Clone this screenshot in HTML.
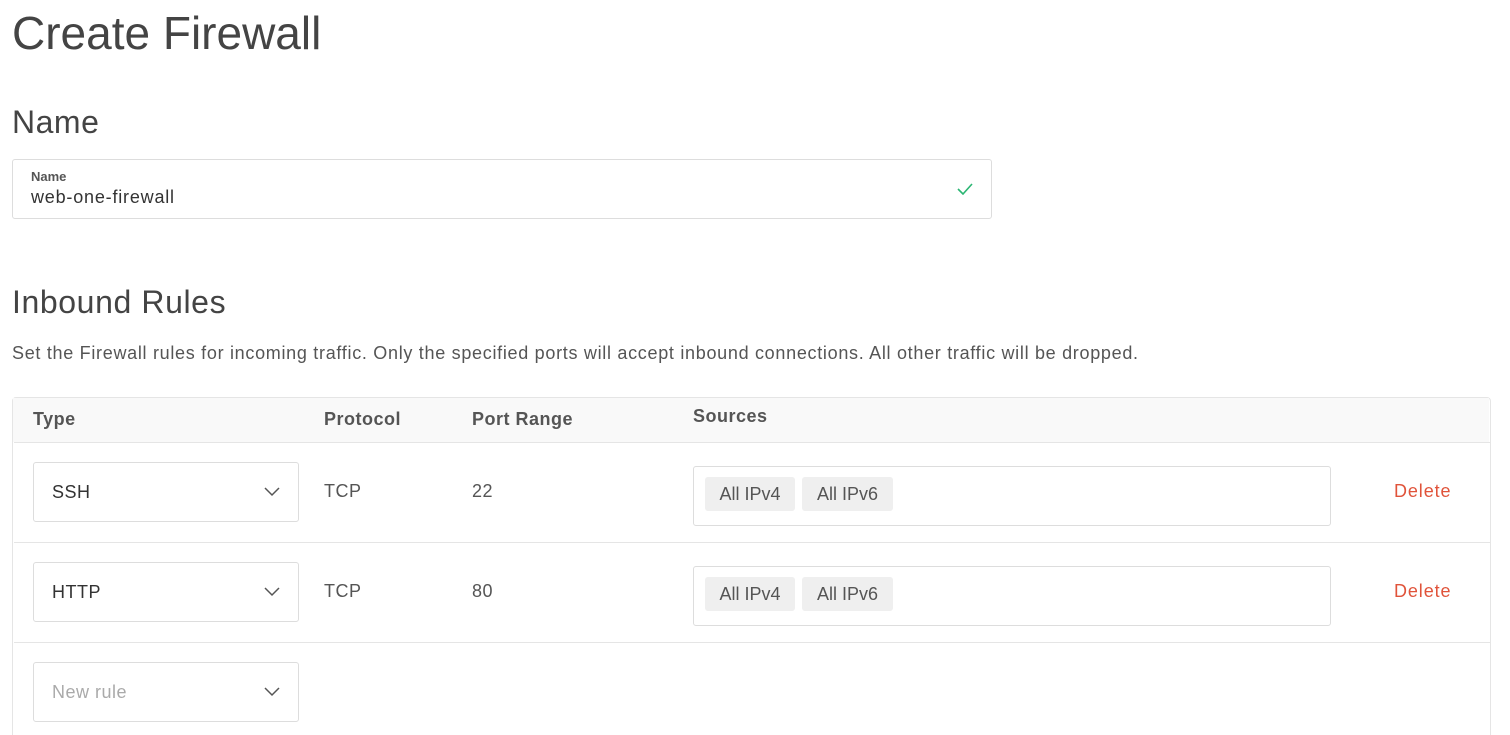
<!DOCTYPE html>
<html><head><style>
html,body{margin:0;height:735px;overflow:hidden}
body{background:#fff;font-family:"Liberation Sans",sans-serif;color:#444;width:1510px;position:relative}
.a{position:absolute}
.sel{position:absolute;left:33px;width:264px;height:58px;border:1px solid #ddd;border-radius:3px;background:#fff}
.sel span{position:absolute;left:18px;top:19px;font-size:18px;color:#333;letter-spacing:0.5px}
.sel svg{position:absolute;right:18px;top:24px}
.src{position:absolute;left:693px;width:636px;height:58px;border:1px solid #ddd;border-radius:3px}
.tag{position:absolute;top:10px;height:34px;background:#efefef;border-radius:3px;font-size:18px;color:#555;line-height:34px;text-align:center}
.del{position:absolute;left:1394px;font-size:18px;color:#e0533a;letter-spacing:0.9px}
.cell{position:absolute;font-size:18px;color:#555;letter-spacing:0.5px}
.row{position:absolute;left:14px;width:1476px;height:100px;border-top:1px solid #e5e5e5}
</style></head><body>
<div class="a" style="left:12px;top:6px;font-size:46px;font-weight:300;color:#444">Create Firewall</div>
<div class="a" style="left:12px;top:104px;font-size:32px;color:#444;letter-spacing:0.5px">Name</div>
<div class="a" style="left:12px;top:284px;font-size:32px;color:#444;letter-spacing:0.6px">Inbound Rules</div>
<div class="a" style="left:12px;top:159px;width:978px;height:58px;border:1px solid #ddd;border-radius:3px">
 <div class="a" style="left:18px;top:9px;font-size:13px;font-weight:bold;color:#555">Name</div>
 <div class="a" style="left:18px;top:27px;font-size:18px;color:#333;letter-spacing:0.8px">web-one-firewall</div>
 <svg class="a" style="left:944px;top:23px" width="16" height="12"><path d="M1 6l5 5L15 1" stroke="#2bb673" stroke-width="1.6" fill="none"/></svg>
</div>
<div class="a" style="left:12px;top:343px;font-size:18px;color:#555;letter-spacing:0.7px;white-space:nowrap">Set the Firewall rules for incoming traffic. Only the specified ports will accept inbound connections. All other traffic will be dropped.</div>
<div class="a" style="left:12px;top:397px;width:1477px;height:360px;border:1px solid #e5e5e5;border-radius:4px"></div>
<div class="a" style="left:13px;top:398px;width:1476px;height:44px;background:#f9f9f9"></div>
<div class="cell" style="left:33px;top:409px;font-weight:bold">Type</div>
<div class="cell" style="left:324px;top:409px;font-weight:bold">Protocol</div>
<div class="cell" style="left:472px;top:409px;font-weight:bold">Port Range</div>
<div class="cell" style="left:693px;top:406px;font-weight:bold">Sources</div>
<div class="row" style="top:442px"></div>
<div class="row" style="top:542px"></div>
<div class="row" style="top:642px"></div>

<div class="sel" style="top:462px"><span>SSH</span><svg width="16" height="10"><path d="M1 1l7 7 7-7" stroke="#555" stroke-width="1.5" fill="none"/></svg></div>
<div class="cell" style="left:324px;top:481px">TCP</div>
<div class="cell" style="left:472px;top:481px">22</div>
<div class="src" style="top:466px"><div class="tag" style="left:11px;width:90px">All IPv4</div><div class="tag" style="left:108px;width:91px">All IPv6</div></div>
<div class="del" style="top:481px">Delete</div>

<div class="sel" style="top:562px"><span>HTTP</span><svg width="16" height="10"><path d="M1 1l7 7 7-7" stroke="#555" stroke-width="1.5" fill="none"/></svg></div>
<div class="cell" style="left:324px;top:581px">TCP</div>
<div class="cell" style="left:472px;top:581px">80</div>
<div class="src" style="top:566px"><div class="tag" style="left:11px;width:90px">All IPv4</div><div class="tag" style="left:108px;width:91px">All IPv6</div></div>
<div class="del" style="top:581px">Delete</div>

<div class="sel" style="top:662px"><span style="color:#aaa">New rule</span><svg width="16" height="10"><path d="M1 1l7 7 7-7" stroke="#555" stroke-width="1.5" fill="none"/></svg></div>
</body></html>
